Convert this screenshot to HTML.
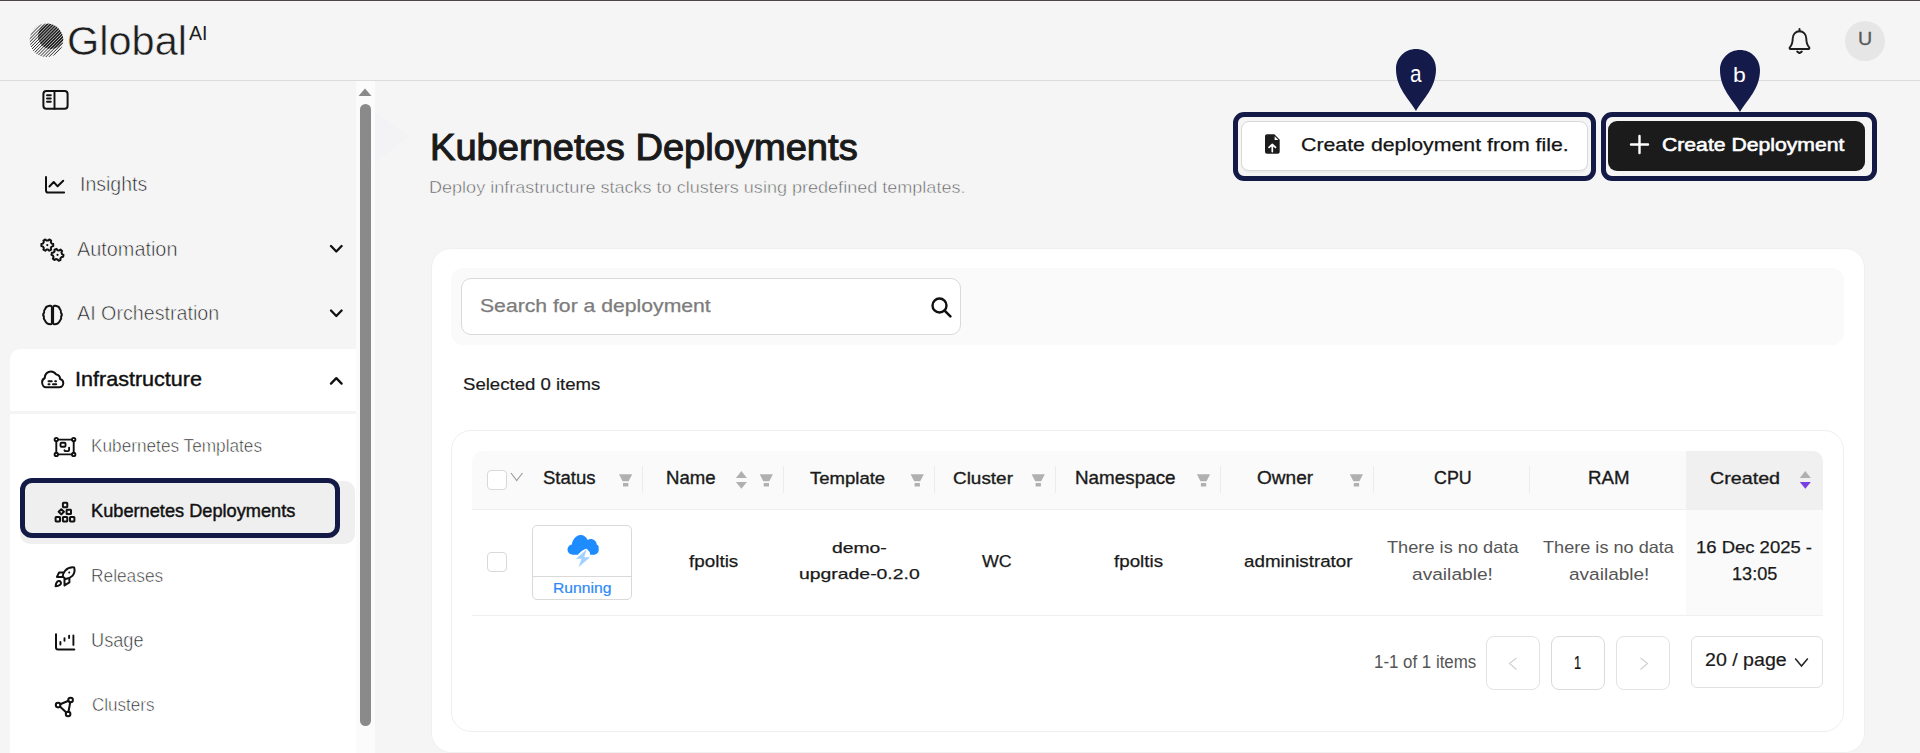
<!DOCTYPE html>
<html><head><meta charset="utf-8">
<style>
*{box-sizing:border-box;margin:0;padding:0}
html,body{width:1920px;height:753px;overflow:hidden;background:#f5f5f5;font-family:"Liberation Sans",sans-serif;color:#1a1a1a;position:relative}
.a{position:absolute}
.t{position:absolute;white-space:nowrap;line-height:1;transform-origin:0 0}
svg{position:absolute;overflow:visible}
.div{position:absolute;top:466px;width:1px;height:27px;background:#ececec}
.pgb{position:absolute;top:636px;width:54px;height:54px;border:1px solid #e3e3e3;border-radius:8px;background:#fff}
</style></head><body>
<div class="a" style="left:0;top:0;width:1920px;height:1px;background:#4c4744"></div>
<div class="a" style="left:0;top:80px;width:1920px;height:1px;background:#dcdcdc"></div>

<!-- logo mark -->
<svg style="left:29px;top:23px" width="36" height="36" viewBox="0 0 36 36">
  <defs><clipPath id="lc"><circle cx="17.5" cy="17.3" r="16.8"/></clipPath>
  <clipPath id="lc2"><circle cx="22" cy="13" r="13"/></clipPath></defs>
  <g clip-path="url(#lc)">
    <path d="M-42.0 40L38.0 -40 M-38.9 40L41.1 -40 M-35.8 40L44.2 -40 M-32.7 40L47.3 -40 M-29.6 40L50.4 -40 M-26.5 40L53.5 -40 M-23.4 40L56.6 -40 M-20.3 40L59.7 -40 M-17.2 40L62.8 -40 M-14.1 40L65.9 -40 M-11.0 40L69.0 -40 M-7.9 40L72.1 -40 M-4.8 40L75.2 -40 M-1.7 40L78.3 -40 M1.4 40L81.4 -40 M4.5 40L84.5 -40 M7.6 40L87.6 -40 M10.7 40L90.7 -40 M13.8 40L93.8 -40 M16.9 40L96.9 -40 M20.0 40L100.0 -40 M23.1 40L103.1 -40 M26.2 40L106.2 -40 M29.3 40L109.3 -40 M32.4 40L112.4 -40 M35.5 40L115.5 -40" stroke="#2a2a2a" stroke-width="1"/>
    <g clip-path="url(#lc2)"><rect x="0" y="0" width="36" height="36" fill="#999" opacity=".12"/><path d="M-42.0 40L38.0 -40 M-38.9 40L41.1 -40 M-35.8 40L44.2 -40 M-32.7 40L47.3 -40 M-29.6 40L50.4 -40 M-26.5 40L53.5 -40 M-23.4 40L56.6 -40 M-20.3 40L59.7 -40 M-17.2 40L62.8 -40 M-14.1 40L65.9 -40 M-11.0 40L69.0 -40 M-7.9 40L72.1 -40 M-4.8 40L75.2 -40 M-1.7 40L78.3 -40 M1.4 40L81.4 -40 M4.5 40L84.5 -40 M7.6 40L87.6 -40 M10.7 40L90.7 -40 M13.8 40L93.8 -40 M16.9 40L96.9 -40 M20.0 40L100.0 -40 M23.1 40L103.1 -40 M26.2 40L106.2 -40 M29.3 40L109.3 -40 M32.4 40L112.4 -40 M35.5 40L115.5 -40" stroke="#1e1e1e" stroke-width="1.55"/></g>
  </g>
</svg>
<!-- bell -->
<svg style="left:1787px;top:27px" width="26" height="28" viewBox="0 0 26 28">
  <path d="M12.5 2v2.2" stroke="#1e1e1e" stroke-width="2" stroke-linecap="round"/>
  <path d="M12.5 4.2c-3.9 0-6.8 3.2-6.8 7.3 0 4.3-.5 6.2-2.9 8.9-.5.6-.2 1.6.7 1.6h18c.9 0 1.2-1 .7-1.6-2.4-2.7-2.9-4.6-2.9-8.9 0-4.1-2.9-7.3-6.8-7.3z" fill="none" stroke="#1e1e1e" stroke-width="1.9" stroke-linejoin="round"/>
  <path d="M10.2 24.6l2.3 1.5 2.3-1.5" fill="none" stroke="#1e1e1e" stroke-width="1.9" stroke-linecap="round" stroke-linejoin="round"/>
</svg>
<div class="a" style="left:1845px;top:21px;width:40px;height:40px;border-radius:50%;background:#e6e6e6"></div>

<!-- sidebar panel -->
<div class="a" style="left:10px;top:349px;width:346px;height:420px;background:#fff;border-radius:10px 0 0 0"></div>
<div class="a" style="left:10px;top:411px;width:346px;height:3px;background:#f4f4f4"></div>
<div class="a" style="left:20px;top:481px;width:335px;height:63px;background:#efefef;border-radius:10px"></div>
<div class="a" style="left:20px;top:478px;width:320px;height:60px;border:5px solid #141a46;border-radius:12px"></div>

<!-- scrollbar -->
<div class="a" style="left:356px;top:81px;width:19px;height:672px;background:#fbfbfb"></div>
<svg style="left:358px;top:88px" width="14" height="8" viewBox="0 0 14 8"><path d="M7 0.5L13.5 8H0.5z" fill="#8a8a8a"/></svg>
<div class="a" style="left:360px;top:104px;width:11px;height:622px;border-radius:5.5px;background:#8a8a8a"></div>
<svg style="left:375px;top:110px" width="40" height="60" viewBox="0 0 40 60"><path d="M0 2L35 26.5L0 52z" fill="#f1f2f6" opacity=".6"/></svg>

<!-- sidebar icons -->
<svg style="left:0;top:0" width="400" height="753" viewBox="0 0 400 753" fill="none" stroke="#111" stroke-width="2" stroke-linecap="round" stroke-linejoin="round">
  <!-- collapse -->
  <rect x="43.4" y="91" width="24.2" height="17.8" rx="3"/>
  <path d="M54.5 91v17.8M47 95.2h3.8M47 98.5h3.8M47 101.7h3.8" stroke-width="1.9"/>
  <!-- insights -->
  <path d="M46 177v13.4c0 1.2.9 2.1 2.1 2.1h16"/>
  <path d="M49.4 186.5l4.3-4.5 3.9 4.3 5.6-5.6"/>
  <!-- automation gears -->
  <path d="M48.16 240.58 L49.33 239.45 L51.17 240.52 L50.78 242.09 L51.64 243.59 L53.21 244.04 L53.21 246.16 L51.64 246.61 L50.78 248.11 L51.17 249.68 L49.33 250.75 L48.16 249.62 L46.44 249.62 L45.27 250.75 L43.43 249.68 L43.82 248.11 L42.96 246.61 L41.39 246.16 L41.39 244.04 L42.96 243.59 L43.82 242.09 L43.43 240.52 L45.27 239.45 L46.44 240.58z" stroke-width="2"/>
  <path d="M59.13 250.50 L60.48 249.59 L62.11 250.96 L61.45 252.44 L62.04 254.06 L63.50 254.78 L63.13 256.87 L61.52 257.04 L60.41 258.36 L60.52 259.99 L58.52 260.71 L57.56 259.40 L55.87 259.10 L54.52 260.01 L52.89 258.64 L53.55 257.16 L52.96 255.54 L51.50 254.82 L51.87 252.73 L53.48 252.56 L54.59 251.24 L54.48 249.61 L56.48 248.89 L57.44 250.20z" stroke-width="2"/>
  <circle cx="47.3" cy="245.1" r="1.1" fill="#111" stroke="none"/>
  <circle cx="57.5" cy="254.8" r="1.1" fill="#111" stroke="none"/>
  <!-- brain -->
  <path d="M 51.90 307.20 C 51.50 305.80 49.90 305.30 48.60 306.00 C 46.90 306.20 45.60 307.40 45.20 308.90 C 44.10 309.80 43.70 311.30 44.10 312.60 C 43.10 313.70 43.10 315.50 43.90 316.60 C 43.50 318.10 43.90 319.60 45.00 320.60 C 45.90 322.60 48.10 324.20 50.30 324.20 C 51.10 324.20 51.60 323.90 51.90 323.40 Z" stroke-width="2"/>
  <path d="M 53.10 307.20 C 53.50 305.80 55.10 305.30 56.40 306.00 C 58.10 306.20 59.40 307.40 59.80 308.90 C 60.90 309.80 61.30 311.30 60.90 312.60 C 61.90 313.70 61.90 315.50 61.10 316.60 C 61.50 318.10 61.10 319.60 60.00 320.60 C 59.10 322.60 56.90 324.20 54.70 324.20 C 53.90 324.20 53.40 323.90 53.10 323.40 Z" stroke-width="2"/>
  <!-- infrastructure cloud -->
  <path d="M46 387.3h13.2c2.4 0 4.1-1.9 4.1-4.2 0-2-1.4-3.7-3.3-4.1.3-2.3-1.4-4.3-3.8-4.4-1.1-1.9-3.1-3.1-5.3-3.1-3.4 0-6.1 2.8-6.1 6.1v.4c-1.6.8-2.7 2.4-2.7 4.3 0 2.7 1.8 5 3.9 5z"/>
  <path d="M48.5 381.2h3.2M55.2 381.2h.8M48.5 384.3h1M53 384.3h3.2" stroke-width="2"/>
  <!-- chevrons -->
  <path d="M331 246l5.3 5.5 5.3-5.5M331 310.5l5.3 5.5 5.3-5.5M331 383.6l5.3-5.5 5.3 5.5" stroke-width="2.3"/>
  <!-- templates -->
  <g stroke-width="1.9">
    <path d="M58.3 439.6h13.4M58.3 454.4h13.4M56.3 441.5v11M73.7 441.5v11"/>
    <circle cx="56.3" cy="439.6" r="1.7"/><circle cx="73.7" cy="439.6" r="1.7"/>
    <circle cx="56.3" cy="454.4" r="1.7"/><circle cx="73.7" cy="454.4" r="1.7"/>
    <rect x="60.5" y="442.8" width="5" height="3.9" rx="1"/>
    <path d="M64.5 450.2c0 .6.4 .9 1 .9h2.6c.6 0 1-.4 1-1v-2.5"/>
  </g>
  <!-- deployments -->
  <g stroke-width="2">
    <rect x="62.9" y="502.8" width="4.4" height="4.4" rx=".6"/>
    <path d="M61.3 509.2l2.6 2.6-2.6 2.6-2.6-2.6z"/>
    <rect x="66.6" y="509.7" width="4.4" height="4.4" rx=".6"/>
    <rect x="55.6" y="517" width="4.4" height="4.4" rx=".6"/>
    <rect x="62.9" y="517" width="4.4" height="4.4" rx=".6"/>
    <rect x="70" y="517" width="4.4" height="4.4" rx=".6"/>
  </g>
  <!-- releases rocket -->
  <g stroke-width="2">
    <path d="M74.2 567.4C70.5 567 67.2 568.4 65.2 570.6 63.7 572.3 62.9 574.5 62.7 576.4L65.5 579C67.6 578.8 70.5 577.9 72.6 575.6 74.5 573.4 74.9 570.2 74.2 567.4z"/>
    <circle cx="69.2" cy="572.5" r="1" fill="#111" stroke="none"/>
    <path d="M63.4 572.5H59.1L56.9 576.9H62.4"/>
    <path d="M69.4 578.9V582.4L64.5 585.4V579.3"/>
    <path d="M55.6 586.2C55.8 584.4 56.3 582.6 57.4 581.6 58.4 580.7 59.9 580.9 60.6 581.8 61.3 582.8 61 584.2 59.8 585 58.6 585.8 57 586.1 55.6 586.2z"/>
  </g>
  <!-- usage -->
  <path d="M56 634.3v13.2c0 1.1.9 2 2 2h16.3"/>
  <path d="M60.4 641.9v2.7M64.5 638.1v2.7M69.1 635.6v2.5M73.4 635.4v9.5" stroke-width="1.9"/>
  <!-- clusters -->
  <g stroke-width="2">
    <circle cx="58.1" cy="705.1" r="2.3"/><circle cx="70.6" cy="700" r="2.3"/><circle cx="68.1" cy="714" r="2.3"/>
    <path d="M60.2 704.2l8.3-3.4M59.9 706.6l6.4 5.9M70.2 702.3l-1.7 9.4"/>
  </g>
</svg>

<!-- buttons -->
<div class="a" style="left:1233px;top:112px;width:363px;height:69px;border:5px solid #141a46;border-radius:11px"></div>
<div class="a" style="left:1241px;top:121px;width:347px;height:50px;background:#fff;border:1px solid #d9d9d9;border-radius:8px;box-shadow:0 2px 0 rgba(0,0,0,.03)"></div>
<svg style="left:1265px;top:134px" width="15" height="20" viewBox="0 0 15 20">
  <path d="M2 0.3h7.4l5.3 5.4v12c0 1.1-.9 2-2 2H2c-1.1 0-2-.9-2-2V2.3C0 1.2.9.3 2 .3z" fill="#1c1c1c"/>
  <path d="M9.6 2.2v3.9h3.8z" fill="#fff"/>
  <path d="M7.3 17.6V10.5M4.1 13.4l3.2-3.1 3.2 3.1" fill="none" stroke="#fff" stroke-width="1.7" stroke-linecap="round" stroke-linejoin="round"/>
</svg>
<div class="a" style="left:1601px;top:112px;width:276px;height:69px;border:5px solid #141a46;border-radius:11px"></div>
<div class="a" style="left:1608px;top:121px;width:257px;height:50px;background:#1b1b1b;border-radius:9px"></div>
<svg style="left:1630px;top:135px" width="19" height="19" viewBox="0 0 19 19"><path d="M9.5 1v17M1 9.5h17" stroke="#fff" stroke-width="2.4" stroke-linecap="round"/></svg>

<!-- pins -->
<svg style="left:1395px;top:48px" width="42" height="64" viewBox="0 0 42 64"><path d="M21 63C14 51 1 40 1 21 1 9.6 10 1 21 1s20 8.6 20 20c0 19-13 30-20 42z" fill="#141a4a"/></svg>
<svg style="left:1719px;top:49px" width="42" height="64" viewBox="0 0 42 64"><path d="M21 63C14 51 1 40 1 21 1 9.6 10 1 21 1s20 8.6 20 20c0 19-13 30-20 42z" fill="#141a4a"/></svg>

<!-- card -->
<div class="a" style="left:431px;top:248px;width:1434px;height:505px;background:#fff;border:1px solid #f0f0f0;border-radius:20px"></div>
<div class="a" style="left:451px;top:268px;width:1393px;height:77px;background:#fafafa;border-radius:12px"></div>
<div class="a" style="left:461px;top:278px;width:500px;height:57px;background:#fff;border:1px solid #d9d9d9;border-radius:10px"></div>
<svg style="left:930px;top:296px" width="24" height="24" viewBox="0 0 24 24"><circle cx="9.5" cy="9.5" r="7" fill="none" stroke="#111" stroke-width="2.4"/><path d="M14.6 14.6l5.8 5.8" stroke="#111" stroke-width="2.6" stroke-linecap="round"/></svg>

<!-- table card -->
<div class="a" style="left:451px;top:430px;width:1393px;height:302px;border:1px solid #efefef;border-radius:20px"></div>
<div class="a" style="left:472px;top:451px;width:1351px;height:59px;background:#fafafa;border-radius:10px 10px 0 0;border-bottom:1px solid #f0f0f0"></div>
<div class="a" style="left:1686px;top:451px;width:137px;height:58px;background:#f0f0f0;border-radius:0 10px 0 0"></div>
<div class="a" style="left:1686px;top:510px;width:137px;height:105px;background:#fafafa"></div>
<div class="a" style="left:472px;top:615px;width:1351px;height:1px;background:#f0f0f0"></div>
<div class="div" style="left:642px"></div><div class="div" style="left:783px"></div><div class="div" style="left:934px"></div>
<div class="div" style="left:1055px"></div><div class="div" style="left:1220px"></div><div class="div" style="left:1373px"></div>
<div class="div" style="left:1529px"></div>
<div class="a" style="left:487px;top:470px;width:20px;height:20px;border:1px solid #d9d9d9;border-radius:4px;background:#fff"></div>
<svg style="left:510px;top:472px" width="14" height="10" viewBox="0 0 14 10"><path d="M1 1l5.7 7.5L12.5 1" fill="none" stroke="#9a9a9a" stroke-width="1.1"/></svg>
<svg style="left:0;top:0" width="1920" height="753" viewBox="0 0 1920 753" fill="#b0b0b0">
  <g id="flt">
    <path d="M619 474.2h13.2l-3.6 7.1h-6z"/><rect x="623" y="483" width="5.3" height="3.5"/>
  </g>
  <use href="#flt" x="140.7"/><use href="#flt" x="291.6"/><use href="#flt" x="412.6"/><use href="#flt" x="577.9"/><use href="#flt" x="730.8"/>
  <path d="M741.4 471l5.5 6.9h-11z M741.4 488.7l5.5-6.8h-11z"/>
  <path d="M1805.3 471l5.5 6.9h-11z"/>
  <path d="M1805.3 488.7l5.5-6.8h-11z" fill="#7a3fe0"/>
</svg>
<div class="a" style="left:487px;top:552px;width:20px;height:20px;border:1px solid #d9d9d9;border-radius:4px;background:#fff"></div>
<div class="a" style="left:532px;top:525px;width:100px;height:75px;border:1px solid #d9d9d9;border-radius:5px;background:#fff"></div>
<div class="a" style="left:533px;top:576px;width:98px;height:1px;background:#d9d9d9"></div>
<svg style="left:566px;top:534px" width="34" height="34" viewBox="0 0 34 34">
  <path d="M7 20.8c-3 0-5.5-2.3-5.5-5.2 0-2.6 1.9-4.7 4.4-5.1.3-4.3 3.8-9.6 8.6-9.6 3.3 0 6.1 2.1 7.2 5 .9-.5 1.9-.8 3-.8 3.3 0 6 2.5 6.1 5.7 2.3.5 1.9 2.9 1.9 5.2 0 2.9-2.5 4.8-5.5 4.8h-3.1c.3-2.6-1.6-5.2-4.6-5.2-1.8 0-3.2.8-4.4 2l-3.3 3.2z" fill="#1e8cff"/>
  <path d="M20.1 16.2l-9.6 8.4h5.4l-2.8 7.8 10.3-8.8h-5.6z" fill="#fff" stroke="#fff" stroke-width="3" stroke-linejoin="round"/><path d="M20.1 16.2l-9.6 8.4h5.4l-2.8 7.8 10.3-8.8h-5.6z" fill="#a3d1ff" stroke="#a3d1ff" stroke-width=".6" stroke-linejoin="round"/>
</svg>

<!-- pagination -->
<div class="pgb" style="left:1486px"></div>
<div class="pgb" style="left:1551px;border-color:#dadada"></div>
<div class="pgb" style="left:1616px"></div>
<svg style="left:1508px;top:657px" width="10" height="14" viewBox="0 0 10 14"><path d="M8.5 1L1.5 6.5 8.5 12.5" fill="none" stroke="#cfcfcf" stroke-width="1.1"/></svg>
<svg style="left:1639px;top:657px" width="10" height="14" viewBox="0 0 10 14"><path d="M1.5 1l7 5.5-7 6" fill="none" stroke="#cfcfcf" stroke-width="1.1"/></svg>
<div class="a" style="left:1691px;top:636px;width:132px;height:52px;border:1px solid #e0e0e0;border-radius:6px;background:#fff"></div>
<svg style="left:1794px;top:657px" width="16" height="11" viewBox="0 0 16 11"><path d="M1.2 1.5l6.3 7.5 6.3-7.5" fill="none" stroke="#222" stroke-width="1.5"/></svg>

<div class="t" id="global" style="left:66.924px;top:21px;font-size:41.019px;letter-spacing:0px;font-weight:400;color:#1e1e1e;-webkit-text-stroke:0.5px #f5f5f5;transform:scaleX(1.012);">Global</div>
<div class="t" id="ai" style="left:189px;top:23px;font-size:20.393px;letter-spacing:0px;font-weight:400;color:#1e1e1e;transform:scaleX(0.958);">AI</div>
<div class="t" id="u" style="left:1858.228px;top:31px;font-size:17.917px;letter-spacing:0px;font-weight:400;color:#5a5a5a;-webkit-text-stroke:0.3px #5a5a5a;transform:scaleX(1.097);">U</div>
<div class="t" id="insights" style="left:80.246px;top:174px;font-size:20.785px;letter-spacing:0px;font-weight:400;color:#1e1e1e;-webkit-text-stroke:0.6px #f5f5f5;transform:scaleX(0.938);">Insights</div>
<div class="t" id="automation" style="left:77.4px;top:239px;font-size:20.096px;letter-spacing:0px;font-weight:400;color:#1e1e1e;-webkit-text-stroke:0.6px #f5f5f5;transform:scaleX(0.989);">Automation</div>
<div class="t" id="aiorch" style="left:77px;top:304px;font-size:19.546px;letter-spacing:0px;font-weight:400;color:#1e1e1e;-webkit-text-stroke:0.6px #f5f5f5;transform:scaleX(1.008);">AI Orchestration</div>
<div class="t" id="infra" style="left:75.459px;top:370px;font-size:19.821px;letter-spacing:-0px;font-weight:400;color:#111;-webkit-text-stroke:0.4px #111;transform:scaleX(1.088);">Infrastructure</div>
<div class="t" id="ktempl" style="left:90.922px;top:436px;font-size:18.995px;letter-spacing:0px;font-weight:400;color:#222222;-webkit-text-stroke:0.6px #ffffff;transform:scaleX(0.907);">Kubernetes Templates</div>
<div class="t" id="kdepl" style="left:90.843px;top:502px;font-size:18.858px;letter-spacing:0px;font-weight:400;color:#111;-webkit-text-stroke:0.45px #111;transform:scaleX(0.966);">Kubernetes Deployments</div>
<div class="t" id="releases" style="left:91.113px;top:567px;font-size:18.72px;letter-spacing:0px;font-weight:400;color:#222222;-webkit-text-stroke:0.6px #ffffff;transform:scaleX(0.926);">Releases</div>
<div class="t" id="usage" style="left:91.044px;top:630px;font-size:20.393px;letter-spacing:0px;font-weight:400;color:#222222;-webkit-text-stroke:0.6px #ffffff;transform:scaleX(0.892);">Usage</div>
<div class="t" id="clusters" style="left:91.647px;top:696px;font-size:18.72px;letter-spacing:0px;font-weight:400;color:#222222;-webkit-text-stroke:0.6px #ffffff;transform:scaleX(0.912);">Clusters</div>
<div class="t" id="title" style="left:430.45px;top:129px;font-size:37.577px;letter-spacing:0px;font-weight:400;color:#1a1a1a;-webkit-text-stroke:1.1px #1a1a1a;transform:scaleX(1.014);">Kubernetes Deployments</div>
<div class="t" id="subtitle" style="left:429.355px;top:179px;font-size:16.105px;letter-spacing:0px;font-weight:400;color:#5e5e5e;-webkit-text-stroke:0.5px #f5f5f5;transform:scaleX(1.121);">Deploy infrastructure stacks to clusters using predefined templates.</div>
<div class="t" id="btna" style="left:1301.233px;top:136px;font-size:18.307px;letter-spacing:-0px;font-weight:400;color:#141414;-webkit-text-stroke:0.25px #141414;transform:scaleX(1.165);">Create deployment from file.</div>
<div class="t" id="btnb" style="left:1662.242px;top:136px;font-size:18.445px;letter-spacing:0px;font-weight:400;color:#ffffff;-webkit-text-stroke:0.55px #ffffff;transform:scaleX(1.148);">Create Deployment</div>
<div class="t" id="pina" style="left:1409.769px;top:62px;font-size:24.045px;letter-spacing:0px;font-weight:400;color:#ffffff;transform:scaleX(0.864);">a</div>
<div class="t" id="pinb" style="left:1733.417px;top:66px;font-size:19.959px;letter-spacing:0px;font-weight:400;color:#ffffff;transform:scaleX(1.155);">b</div>
<div class="t" id="search" style="left:480.341px;top:298px;font-size:17.756px;letter-spacing:0px;font-weight:400;color:#7c7c7c;-webkit-text-stroke:0.25px #7c7c7c;transform:scaleX(1.193);">Search for a deployment</div>
<div class="t" id="selected" style="left:463.07px;top:376px;font-size:16.38px;letter-spacing:0px;font-weight:400;color:#1a1a1a;-webkit-text-stroke:0.2px #1a1a1a;transform:scaleX(1.136);">Selected 0 items</div>
<div class="t" id="h_status" style="left:543.373px;top:470px;font-size:17.947px;letter-spacing:0px;font-weight:400;color:#1a1a1a;-webkit-text-stroke:0.35px #1a1a1a;transform:scaleX(1.033);">Status</div>
<div class="t" id="h_name" style="left:665.813px;top:469px;font-size:18.208px;letter-spacing:0px;font-weight:400;color:#1a1a1a;-webkit-text-stroke:0.35px #1a1a1a;transform:scaleX(1.021);">Name</div>
<div class="t" id="h_template" style="left:809.629px;top:470px;font-size:17.206px;letter-spacing:0px;font-weight:400;color:#1a1a1a;-webkit-text-stroke:0.35px #1a1a1a;transform:scaleX(1.078);">Template</div>
<div class="t" id="h_cluster" style="left:952.753px;top:470px;font-size:17.206px;letter-spacing:-0px;font-weight:400;color:#1a1a1a;-webkit-text-stroke:0.35px #1a1a1a;transform:scaleX(1.101);">Cluster</div>
<div class="t" id="h_namespace" style="left:1075.491px;top:469px;font-size:18.208px;letter-spacing:0px;font-weight:400;color:#1a1a1a;-webkit-text-stroke:0.35px #1a1a1a;transform:scaleX(1.036);">Namespace</div>
<div class="t" id="h_owner" style="left:1257.147px;top:470px;font-size:17.947px;letter-spacing:0px;font-weight:400;color:#1a1a1a;-webkit-text-stroke:0.35px #1a1a1a;transform:scaleX(1.062);">Owner</div>
<div class="t" id="h_cpu" style="left:1433.808px;top:470px;font-size:17.947px;letter-spacing:0px;font-weight:400;color:#1a1a1a;-webkit-text-stroke:0.35px #1a1a1a;transform:scaleX(0.994);">CPU</div>
<div class="t" id="h_ram" style="left:1587.505px;top:470px;font-size:17.947px;letter-spacing:0px;font-weight:400;color:#1a1a1a;-webkit-text-stroke:0.35px #1a1a1a;transform:scaleX(1.041);">RAM</div>
<div class="t" id="h_created" style="left:1709.815px;top:470px;font-size:17.206px;letter-spacing:0px;font-weight:400;color:#1a1a1a;-webkit-text-stroke:0.35px #1a1a1a;transform:scaleX(1.146);">Created</div>
<div class="t" id="running" style="left:552.944px;top:581px;font-size:14.04px;letter-spacing:0px;font-weight:400;color:#2f8af5;-webkit-text-stroke:0.2px #2f8af5;transform:scaleX(1.118);">Running</div>
<div class="t" id="r_name" style="left:689.111px;top:554px;font-size:16.793px;letter-spacing:0px;font-weight:400;color:#1a1a1a;-webkit-text-stroke:0.25px #1a1a1a;transform:scaleX(1.124);">fpoltis</div>
<div class="t" id="r_t1" style="left:831.926px;top:540px;font-size:15.416px;letter-spacing:0px;font-weight:400;color:#1a1a1a;-webkit-text-stroke:0.25px #1a1a1a;transform:scaleX(1.255);">demo-</div>
<div class="t" id="r_t2" style="left:798.836px;top:566px;font-size:15.416px;letter-spacing:0px;font-weight:400;color:#1a1a1a;-webkit-text-stroke:0.25px #1a1a1a;transform:scaleX(1.258);">upgrade-0.2.0</div>
<div class="t" id="r_wc" style="left:981.5px;top:554px;font-size:16.798px;letter-spacing:-0px;font-weight:400;color:#1a1a1a;-webkit-text-stroke:0.25px #1a1a1a;transform:scaleX(1.063);">WC</div>
<div class="t" id="r_ns" style="left:1114.212px;top:554px;font-size:16.793px;letter-spacing:0px;font-weight:400;color:#1a1a1a;-webkit-text-stroke:0.25px #1a1a1a;transform:scaleX(1.119);">fpoltis</div>
<div class="t" id="r_owner" style="left:1243.848px;top:554px;font-size:16.793px;letter-spacing:0px;font-weight:400;color:#1a1a1a;-webkit-text-stroke:0.25px #1a1a1a;transform:scaleX(1.119);">administrator</div>
<div class="t" id="r_cpu1" style="left:1386.836px;top:539px;font-size:16.518px;letter-spacing:0px;font-weight:400;color:#555555;transform:scaleX(1.103);">There is no data</div>
<div class="t" id="r_cpu2" style="left:1412.333px;top:566px;font-size:17.206px;letter-spacing:0px;font-weight:400;color:#555555;transform:scaleX(1.114);">available!</div>
<div class="t" id="r_ram1" style="left:1542.637px;top:539px;font-size:16.518px;letter-spacing:0px;font-weight:400;color:#555555;transform:scaleX(1.098);">There is no data</div>
<div class="t" id="r_ram2" style="left:1568.538px;top:566px;font-size:17.206px;letter-spacing:0px;font-weight:400;color:#555555;transform:scaleX(1.107);">available!</div>
<div class="t" id="r_cr1" style="left:1696.222px;top:539px;font-size:17.229px;letter-spacing:0px;font-weight:400;color:#1a1a1a;-webkit-text-stroke:0.25px #1a1a1a;transform:scaleX(1.072);">16 Dec 2025 -</div>
<div class="t" id="r_cr2" style="left:1731.948px;top:566px;font-size:17.947px;letter-spacing:0px;font-weight:400;color:#1a1a1a;-webkit-text-stroke:0.25px #1a1a1a;transform:scaleX(1.011);">13:05</div>
<div class="t" id="pg_items" style="left:1374.049px;top:654px;font-size:17.619px;letter-spacing:0px;font-weight:400;color:#555555;transform:scaleX(0.958);">1-1 of 1 items</div>
<div class="t" id="pg_1" style="left:1574.277px;top:654px;font-size:18.063px;letter-spacing:0px;font-weight:400;color:#111111;-webkit-text-stroke:0.2px #111111;transform:scaleX(0.708);">1</div>
<div class="t" id="pg_size" style="left:1704.92px;top:652px;font-size:17.894px;letter-spacing:0px;font-weight:400;color:#1a1a1a;-webkit-text-stroke:0.2px #1a1a1a;transform:scaleX(1.096);">20 / page</div>
</body></html>
